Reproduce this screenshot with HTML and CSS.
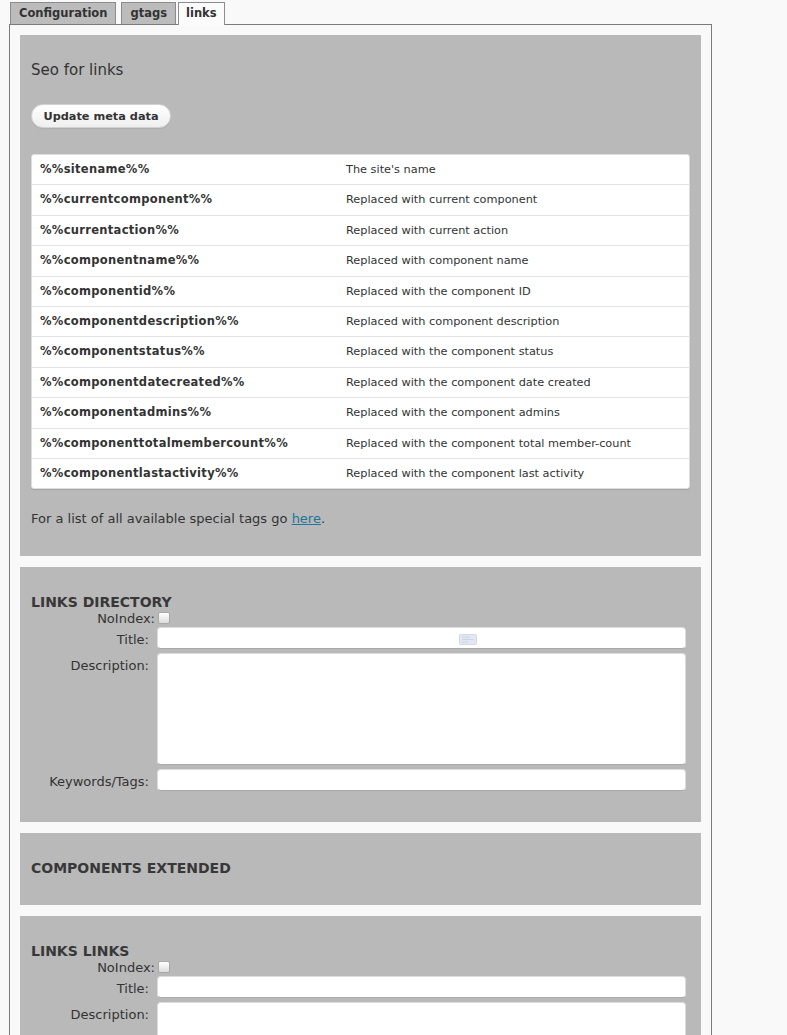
FILE: index.html
```html
<!DOCTYPE html>
<html lang="en">
<head>
<meta charset="utf-8">
<title>links – SEO</title>
<link rel="stylesheet" href="styles.css">
</head>
<body>
<div class="page">
  <nav class="tabs">
    <a class="tab" href="#">Configuration</a>
    <a class="tab" href="#">gtags</a>
    <a class="tab active" href="#">links</a>
  </nav>
  <div class="box">
    <section class="panel">
      <h2 class="panel-title">Seo for links</h2>
      <button class="btn" type="button">Update meta data</button>
      <table class="tags">
        <colgroup><col class="c1"><col></colgroup>
        <tbody>
          <tr><td>%%sitename%%</td><td>The site's name</td></tr>
          <tr><td>%%currentcomponent%%</td><td>Replaced with current component</td></tr>
          <tr><td>%%currentaction%%</td><td>Replaced with current action</td></tr>
          <tr><td>%%componentname%%</td><td>Replaced with component name</td></tr>
          <tr><td>%%componentid%%</td><td>Replaced with the component ID</td></tr>
          <tr><td>%%componentdescription%%</td><td>Replaced with component description</td></tr>
          <tr><td>%%componentstatus%%</td><td>Replaced with the component status</td></tr>
          <tr><td>%%componentdatecreated%%</td><td>Replaced with the component date created</td></tr>
          <tr><td>%%componentadmins%%</td><td>Replaced with the component admins</td></tr>
          <tr><td>%%componenttotalmembercount%%</td><td>Replaced with the component total member-count</td></tr>
          <tr><td>%%componentlastactivity%%</td><td>Replaced with the component last activity</td></tr>
        </tbody>
      </table>
      <p class="note">For a list of all available special tags go <a href="#">here</a>.</p>
    </section>

    <section class="panel">
      <h3 class="section-title">LINKS DIRECTORY</h3>
      <div class="form">
        <div class="field cbrow"><label class="lbl lbl-cb">NoIndex:</label><input type="checkbox" class="cb"></div>
        <div class="field"><label class="lbl">Title:</label><div class="ctl"><input type="text" class="inp"><svg class="ext" width="18" height="11" viewBox="0 0 18 11"><rect x="0.5" y="0.5" width="17" height="10" rx="1" fill="#e3e7f1" stroke="#d3d9e8"/><path d="M3 3h8M3 5.5h12M3 8h6" stroke="#cdd4e6" stroke-width="1"/></svg></div></div>
        <div class="field"><label class="lbl">Description:</label><textarea class="ta"></textarea></div>
        <div class="field"><label class="lbl">Keywords/Tags:</label><input type="text" class="inp"></div>
      </div>
    </section>

    <section class="panel">
      <h3 class="section-title">COMPONENTS EXTENDED</h3>
    </section>

    <section class="panel">
      <h3 class="section-title">LINKS LINKS</h3>
      <div class="form">
        <div class="field cbrow"><label class="lbl lbl-cb">NoIndex:</label><input type="checkbox" class="cb"></div>
        <div class="field"><label class="lbl">Title:</label><input type="text" class="inp"></div>
        <div class="field"><label class="lbl">Description:</label><textarea class="ta"></textarea></div>
        <div class="field"><label class="lbl">Keywords/Tags:</label><input type="text" class="inp"></div>
      </div>
    </section>
  </div>
</div>
</body>
</html>
```

FILE: styles.css
```css
* { box-sizing: border-box; }

html, body {
  margin: 0;
  background: #f9f9f9;
}

body {
  font-family: "DejaVu Sans", Verdana, sans-serif;
  color: #333;
}

.page {
  padding: 2px 0 0 9px;
}

/* Tabs */
.tabs {
  display: flex;
  align-items: flex-start;
  padding-left: 1px;
  height: 23px;
  margin-bottom: -1px;
}

.tab {
  display: block;
  height: 22px;
  padding: 0 8px;
  border: 1px solid #8c8c8c;
  border-bottom: none;
  background: #bcbcbc;
  color: #333;
  font-size: 11.5px;
  font-weight: bold;
  line-height: 20px;
  text-decoration: none;
}

.tab + .tab { margin-left: 5px; }

.tab.active {
  position: relative;
  height: 23px;
  margin-left: 2px;
  padding: 0 7px;
  background: #fbfbfb;
}

/* Container */
.box {
  width: 703px;
  padding: 10px;
  border: 1px solid #7b7b7b;
  background: #f9f9f9;
}

.panel {
  background: #b9b9b9;
  padding: 27px 11px 29px;
}

.panel + .panel { margin-top: 11px; }

.panel-title {
  margin: 0;
  font-size: 15px;
  font-weight: normal;
  line-height: 16px;
  color: #333;
}

.section-title {
  margin: 0;
  font-size: 14px;
  font-weight: bold;
  line-height: 16px;
  color: #383838;
}

/* Button */
.btn {
  display: block;
  margin-top: 26px;
  height: 24px;
  width: 140px;
  padding: 0;
  border: 1px solid #d2d2d2;
  border-radius: 12px;
  background: linear-gradient(#ffffff, #efefef);
  box-shadow: 0 1px 0 rgba(0, 0, 0, 0.06);
  font-family: "DejaVu Sans", Verdana, sans-serif;
  font-size: 11.3px;
  font-weight: bold;
  color: #333;
}

/* Table */
.tags {
  margin-top: 26px;
  width: 100%;
  table-layout: fixed;
  border-collapse: separate;
  border-spacing: 0;
  background: #fff;
  border: 1px solid #dedede;
  border-radius: 3px;
  box-shadow: 0 1px 1px rgba(0, 0, 0, 0.12);
}

.tags .c1 { width: 306px; }

.tags td {
  padding: 8px 8px;
  line-height: 13.4px;
  font-size: 11.3px;
  color: #333;
  vertical-align: middle;
  white-space: nowrap;
}

.tags tr + tr td { border-top: 1px solid #e3e3e3; }

.tags td:first-child {
  font-weight: bold;
  font-size: 11.5px;
  letter-spacing: 0.3px;
}

.note {
  margin: 22px 0 0;
  font-size: 13px;
  line-height: 16px;
  color: #333;
}

.note a { color: #21759b; }

/* Forms */
.form {
  padding-bottom: 2px;
}

.field {
  display: grid;
  grid-template-columns: 124px 529px;
  column-gap: 2px;
  align-items: start;
}

.field + .field { margin-top: 4px; }
.cbrow + .field { margin-top: 1px; }

.lbl {
  display: block;
  padding: 5px 6px 0 0;
  text-align: right;
  font-size: 13px;
  line-height: 16px;
  color: #333;
}

.lbl-cb {
  padding: 1px 0 0 0;
  line-height: 15px;
}

.cb {
  appearance: none;
  -webkit-appearance: none;
  display: block;
  margin: 2px 0 0 1px;
  width: 12px;
  height: 12px;
  border: 1px solid #a8a8a8;
  border-radius: 2px;
  background: linear-gradient(#ffffff, #dcdcdc);
}

.ctl {
  position: relative;
}

.inp {
  display: block;
  width: 529px;
  height: 22px;
  margin: 0;
  padding: 0 4px;
  border: 1px solid #dcdcdc;
  border-bottom-color: #a9a9a9;
  border-radius: 4px;
  background: #fff;
  font-family: "DejaVu Sans", Verdana, sans-serif;
  font-size: 12px;
}

.ta {
  display: block;
  width: 529px;
  height: 112px;
  margin: 0;
  padding: 3px 4px;
  border: 1px solid #dcdcdc;
  border-bottom-color: #a9a9a9;
  border-radius: 4px;
  background: #fff;
  resize: none;
  font-family: "DejaVu Sans", Verdana, sans-serif;
  font-size: 12px;
}

.ext {
  position: absolute;
  left: 302px;
  top: 7px;
}
```
